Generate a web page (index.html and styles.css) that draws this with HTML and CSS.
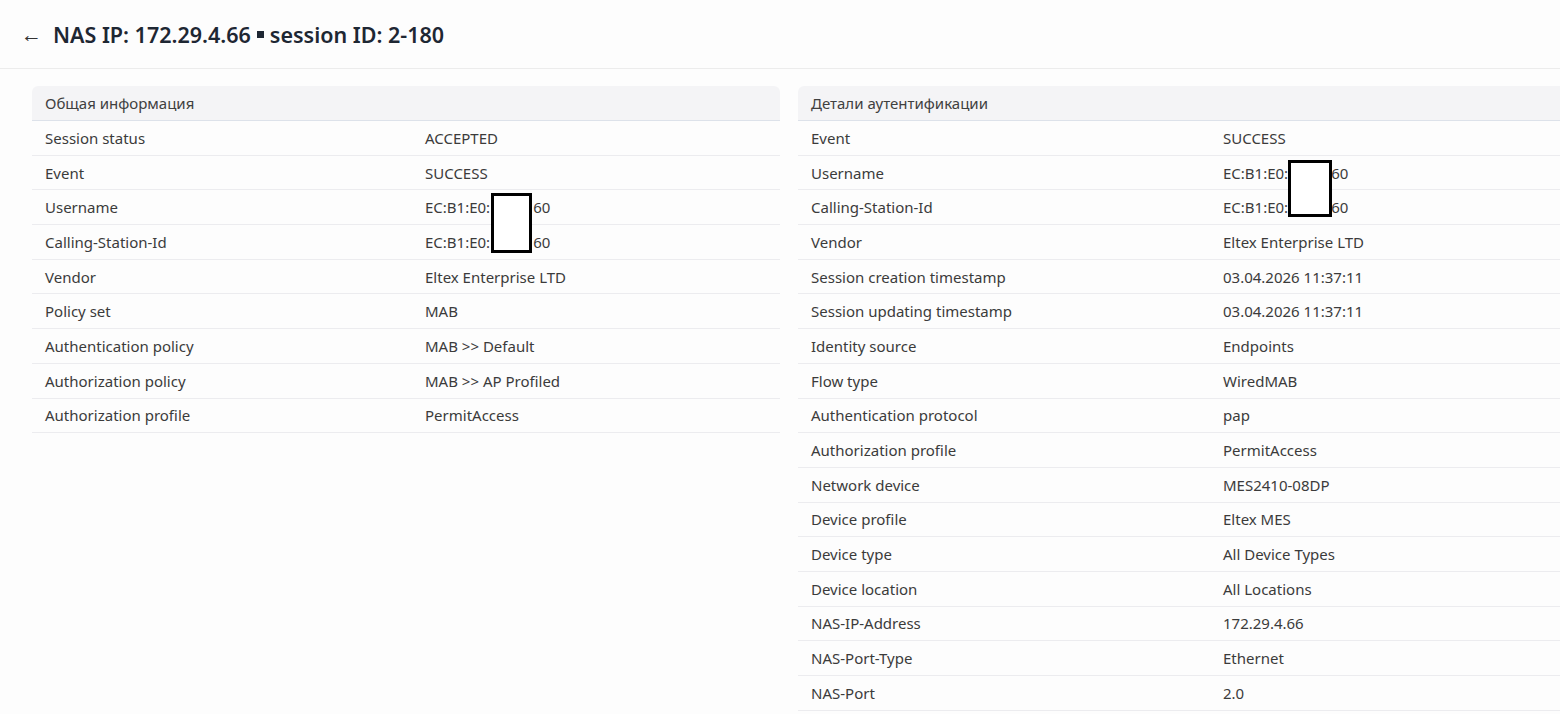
FILE: index.html
```html
<!DOCTYPE html>
<html lang="ru">
<head>
    <meta charset="UTF-8">
    <title>Session 2-180</title>
    <link rel="stylesheet" href="styles.css">
</head>
<body>
    <header class="page-head">
        <span class="back">&larr;</span>
        <h1>NAS IP: 172.29.4.66 <span class="dot"></span> session ID: 2-180</h1>
    </header>
    <main class="cards">
        <section class="card">
            <div class="card-title">Общая информация</div>
            <div class="rows">
                <div class="row"><span>Session status</span><span>ACCEPTED</span></div>
                <div class="row"><span>Event</span><span>SUCCESS</span></div>
                <div class="row"><span>Username</span><span>EC:B1:E0:<i class="gap"></i>60</span></div>
                <div class="row"><span>Calling-Station-Id</span><span>EC:B1:E0:<i class="gap"></i>60</span></div>
                <div class="row"><span>Vendor</span><span>Eltex Enterprise LTD</span></div>
                <div class="row"><span>Policy set</span><span>MAB</span></div>
                <div class="row"><span>Authentication policy</span><span>MAB &gt;&gt; Default</span></div>
                <div class="row"><span>Authorization policy</span><span>MAB &gt;&gt; AP Profiled</span></div>
                <div class="row"><span>Authorization profile</span><span>PermitAccess</span></div>
                <div class="mask mask-left"></div>
            </div>
        </section>
        <section class="card card-wide">
            <div class="card-title">Детали аутентификации</div>
            <div class="rows">
                <div class="row"><span>Event</span><span>SUCCESS</span></div>
                <div class="row"><span>Username</span><span>EC:B1:E0:<i class="gap"></i>60</span></div>
                <div class="row"><span>Calling-Station-Id</span><span>EC:B1:E0:<i class="gap"></i>60</span></div>
                <div class="row"><span>Vendor</span><span>Eltex Enterprise LTD</span></div>
                <div class="row"><span>Session creation timestamp</span><span>03.04.2026 11:37:11</span></div>
                <div class="row"><span>Session updating timestamp</span><span>03.04.2026 11:37:11</span></div>
                <div class="row"><span>Identity source</span><span>Endpoints</span></div>
                <div class="row"><span>Flow type</span><span>WiredMAB</span></div>
                <div class="row"><span>Authentication protocol</span><span>pap</span></div>
                <div class="row"><span>Authorization profile</span><span>PermitAccess</span></div>
                <div class="row"><span>Network device</span><span>MES2410-08DP</span></div>
                <div class="row"><span>Device profile</span><span>Eltex MES</span></div>
                <div class="row"><span>Device type</span><span>All Device Types</span></div>
                <div class="row"><span>Device location</span><span>All Locations</span></div>
                <div class="row"><span>NAS-IP-Address</span><span>172.29.4.66</span></div>
                <div class="row"><span>NAS-Port-Type</span><span>Ethernet</span></div>
                <div class="row"><span>NAS-Port</span><span>2.0</span></div>
                <div class="mask mask-right"></div>
            </div>
        </section>
    </main>
</body>
</html>
```

FILE: styles.css
```css
body {
    margin: 0;
    background: #fdfdfd;
    font-family: "Noto Sans", "Open Sans", sans-serif;
    color: #3b3b3b;
    overflow: hidden;
}
.page-head {
    display: flex;
    align-items: center;
    height: 69px;
    padding-left: 21px;
    border-bottom: 1px solid #ececec;
    box-sizing: border-box;
}
.back {
    font-size: 21px;
    color: #333;
    width: 32px;
}
.page-head h1 {
    margin: 0;
    font-size: 21.5px;
    font-weight: 600;
    color: #1e2733;
    display: flex;
    align-items: center;
    gap: 6px;
}
.dot {
    display: inline-block;
    width: 7px;
    height: 7px;
    background: #1e2733;
}
.cards {
    display: grid;
    grid-template-columns: 748px 810px;
    gap: 18px;
    padding: 17px 0 0 32px;
}
.card-title {
    background: #f4f4f6;
    border-radius: 6px 6px 0 0;
    height: 34px;
    line-height: 34px;
    padding-left: 13px;
    font-size: 15px;
    color: #404040;
    border-bottom: 1px solid #dde2ea;
}
.rows {
    position: relative;
}
.row {
    display: grid;
    grid-template-columns: 380px 1fr;
    height: 33.7px;
    align-items: center;
    padding-left: 13px;
    border-bottom: 1px solid #ececef;
    font-size: 15px;
}
.card-wide .row {
    grid-template-columns: 412px 1fr;
}
.gap {
    display: inline-block;
    width: 43px;
}
.mask {
    position: absolute;
    background: #fff;
    border: 3px solid #000;
    box-sizing: border-box;
}
.mask-left {
    left: 459px;
    top: 72px;
    width: 41px;
    height: 60px;
}
.mask-right {
    left: 490px;
    top: 39px;
    width: 44px;
    height: 57px;
}
```
